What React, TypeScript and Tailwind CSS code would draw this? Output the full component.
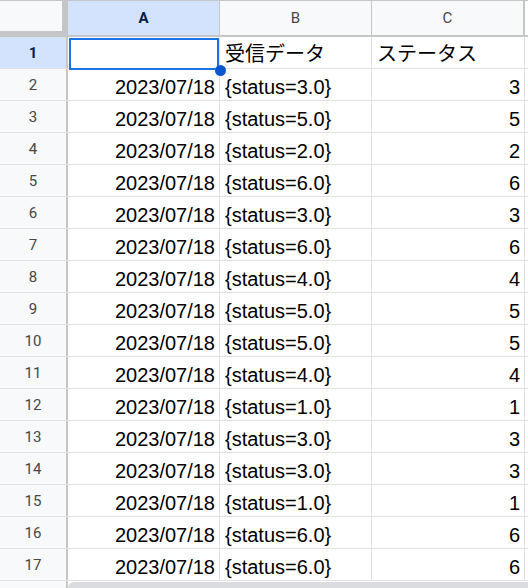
import React from 'react';

const statuses = [3, 5, 2, 6, 3, 6, 4, 5, 5, 4, 1, 3, 3, 1, 6, 6];

const cellFont = { fontFamily: '"Liberation Sans", Arial, "Noto Sans CJK JP", sans-serif' };
const headFont = { fontFamily: 'Roboto, "Liberation Sans", Arial, sans-serif' };

const RowHead: React.FC<{ n: number; active?: boolean }> = ({ n, active }) => (
  <div
    style={headFont}
    className={`w-[68px] shrink-0 flex items-center justify-center pt-[2px] border-r-2 border-[#c4c7c5] text-[15px] ${
      active ? 'bg-[#d3e3fd] text-[#041e49] font-bold' : 'bg-[#f8f9fa] text-[#444746]'
    }`}
  >
    {n}
  </div>
);

const Cell: React.FC<{ children?: React.ReactNode; right?: boolean; last?: boolean }> = ({ children, right, last }) => (
  <div
    className={`${last ? 'w-[153px]' : 'w-[152px]'} shrink-0 border-r border-[#e1e1e1] flex items-end pb-[2px] text-[20px] leading-[22px] text-black whitespace-nowrap overflow-hidden ${
      right ? 'justify-end pr-[4px]' : 'pl-[5px]'
    }`}
  >
    {children}
  </div>
);

const App: React.FC = () => {
  return (
    <div style={cellFont} className="relative w-[528px] h-[588px] overflow-hidden bg-white">
      {/* column headers */}
      <div className="flex h-[37px] border-t border-b-2 border-[#c4c7c5]">
        <div className="w-[68px] shrink-0 bg-[#c4c7c5]">
          <div className="w-[62px] h-[30px] bg-[#f8f9fa]" />
        </div>
        <div style={headFont} className="w-[152px] shrink-0 bg-[#d3e3fd] border-r border-[#c4c7c5] flex items-center justify-center pt-[1px] text-[15px] font-bold text-[#041e49]">
          A
        </div>
        <div style={headFont} className="w-[152px] shrink-0 bg-[#f8f9fa] border-r border-[#c4c7c5] flex items-center justify-center pt-[1px] text-[15px] text-[#444746]">
          B
        </div>
        <div style={headFont} className="w-[153px] shrink-0 bg-[#f8f9fa] border-r-2 border-[#c4c7c5] flex items-center justify-center pt-[1px] text-[15px] text-[#444746]">
          C
        </div>
        <div className="flex-1 bg-white" />
      </div>

      {/* row 1 */}
      <div className="flex h-[32px] border-b border-[#e1e1e1]">
        <RowHead n={1} active />
        <Cell />
        <Cell>
          <span style={{ fontFamily: '"Noto Sans CJK JP", sans-serif' }} className="leading-[26px]">受信データ</span>
        </Cell>
        <Cell last>
          <span style={{ fontFamily: '"Noto Sans CJK JP", sans-serif' }} className="leading-[26px]">ステータス</span>
        </Cell>
        <div className="flex-1" />
      </div>

      {statuses.map((s, i) => (
        <div key={i} className="flex h-[32px] border-b border-[#e1e1e1]">
          <RowHead n={i + 2} />
          <Cell right>2023/07/18</Cell>
          <Cell>{`{status=${s}.0}`}</Cell>
          <Cell right last>
            {s}
          </Cell>
          <div className="flex-1" />
        </div>
      ))}

      {/* horizontal scrollbar */}
      <div className="flex h-[8px]">
        <div className="w-[68px] shrink-0 bg-[#f8f9fa] border-r-2 border-[#c4c7c5]" />
        <div className="flex-1 mt-[1px] bg-[#dadce0] rounded-tl-[6px]" />
      </div>

      {/* selection */}
      <div className="absolute left-[69px] top-[38px] w-[150px] h-[32px] border-2 border-[#1a73e8]" />
      <div className="absolute left-[215px] top-[65px] w-[11px] h-[11px] rounded-full bg-[#0b57d0]" />
    </div>
  );
};

export default App;
